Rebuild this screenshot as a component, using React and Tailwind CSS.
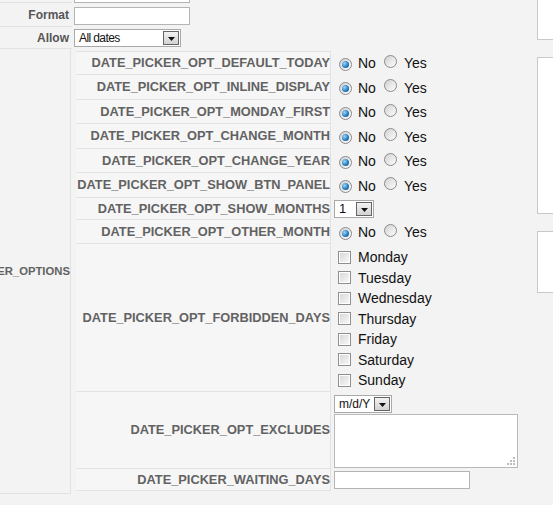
import React from 'react'

// -- small form pieces -------------------------------------------------

function Radio({ checked }) {
  return (
    <span className="inline-flex shrink-0 w-[13px] h-[13px] rounded-full border border-[#8a8a8a] bg-linear-to-br from-[#d2d2d2] to-[#fdfdfd] items-center justify-center">
      {checked && (
        <span className="w-[7px] h-[7px] rounded-full bg-[radial-gradient(circle_at_35%_35%,#9ad8fb,#2a7fc0_55%,#0c4479)]" />
      )}
    </span>
  )
}

function Check() {
  return (
    <span className="inline-flex shrink-0 w-[13px] h-[13px] border border-[#8e8e8e] bg-white p-px">
      <span className="block w-full h-full bg-linear-to-br from-[#d9d9d9] to-[#f7f7f7]" />
    </span>
  )
}

function Arrow() {
  return (
    <span className="flex shrink-0 w-[16px] h-[14px] border border-[#646464] bg-linear-to-b from-[#f2f2f2] to-[#d2d2d2] items-center justify-center">
      <svg width="7" height="4" viewBox="0 0 7 4" className="mt-[2px]">
        <path d="M0 0h7L3.5 4z" fill="#111" />
      </svg>
    </span>
  )
}

function YesNo() {
  return (
    <div className="flex items-center text-[14px] text-[#111]">
      <span className="ml-[5px]"><Radio checked /></span>
      <span className="ml-[6px] mt-px">No</span>
      <span className="ml-[8px]"><Radio /></span>
      <span className="ml-[7px] mt-px">Yes</span>
    </div>
  )
}

// -- nested option rows ------------------------------------------------

function OptRow({ label, h, first, children }) {
  return (
    <div className={`flex ${h}`}>
      <div
        className={`w-[255px] shrink-0 bg-[#f6f6f6] border-b border-r border-[#e2e2e2] flex items-center justify-end text-[12.8px] font-bold text-[#626262] whitespace-nowrap ${first ? 'border-t' : ''}`}
      >
        {label}
      </div>
      <div className="flex-1 flex items-center pl-[3px]">{children}</div>
    </div>
  )
}

const DAYS = ['Monday', 'Tuesday', 'Wednesday', 'Thursday', 'Friday', 'Saturday', 'Sunday']

export default function App() {
  return (
    <div className="w-[553px] h-[505px] overflow-hidden bg-[#f3f3f3] flex font-['Liberation_Sans',Arial,sans-serif]">
      <div className="w-[537px] shrink-0 -mt-[20px]">
        {/* cut-off first row */}
        <div className="flex h-[23px]">
          <div className="w-[72px] shrink-0 border-b border-[#e2e2e2]" />
          <div className="pl-[2px] pt-[5px]">
            <div className="w-[116px] h-[18px] bg-white border border-[#b4b4b4]" />
          </div>
        </div>

        <div className="flex h-[24px]">
          <div className="w-[72px] shrink-0 border-b border-[#e2e2e2] flex items-center justify-end pr-[3px] text-[12px] font-bold text-[#555]">
            Format
          </div>
          <div className="pl-[2px] pt-[4px]">
            <div className="w-[116px] h-[18px] bg-white border border-[#b4b4b4]" />
          </div>
        </div>

        <div className="flex h-[22px]">
          <div className="w-[72px] shrink-0 border-b border-[#e2e2e2] flex items-center justify-end pr-[3px] text-[12px] font-bold text-[#555]">
            Allow
          </div>
          <div className="pl-[2px] pt-[2px]">
            <div className="w-[107px] h-[18px] bg-white border border-[#a9a9a9] flex items-center pl-[4px] pr-px">
              <span className="flex-1 text-[12px] tracking-[-0.6px] text-[#111]">All dates</span>
              <Arrow />
            </div>
          </div>
        </div>

        {/* date picker options */}
        <div className="flex h-[445px]">
          <div className="w-[71px] shrink-0 border-r border-b border-[#e2e2e2] flex items-center justify-end overflow-hidden">
            <span className="text-[11.3px] font-bold text-[#626262] whitespace-nowrap">DATE_PICKER_OPTIONS</span>
          </div>
          <div className="flex-1 ml-[5px] mt-[2px]">
            <OptRow label="DATE_PICKER_OPT_DEFAULT_TODAY" h="h-[24px]" first><YesNo /></OptRow>
            <OptRow label="DATE_PICKER_OPT_INLINE_DISPLAY" h="h-[25px]"><YesNo /></OptRow>
            <OptRow label="DATE_PICKER_OPT_MONDAY_FIRST" h="h-[24px]"><YesNo /></OptRow>
            <OptRow label="DATE_PICKER_OPT_CHANGE_MONTH" h="h-[25px]"><YesNo /></OptRow>
            <OptRow label="DATE_PICKER_OPT_CHANGE_YEAR" h="h-[24px]"><YesNo /></OptRow>
            <OptRow label="DATE_PICKER_OPT_SHOW_BTN_PANEL" h="h-[25px]"><YesNo /></OptRow>
            <OptRow label="DATE_PICKER_OPT_SHOW_MONTHS" h="h-[22px]">
              <div className="w-[40px] h-[18px] bg-white border border-[#a9a9a9] flex items-center pl-[4px] pr-px">
                <span className="flex-1 text-[13px] text-[#111]">1</span>
                <Arrow />
              </div>
            </OptRow>
            <OptRow label="DATE_PICKER_OPT_OTHER_MONTH" h="h-[24px]"><YesNo /></OptRow>
            <OptRow label="DATE_PICKER_OPT_FORBIDDEN_DAYS" h="h-[148px]">
              <div className="self-start pt-[3px] flex flex-col">
                {DAYS.map(d => (
                  <label key={d} className="h-[20.5px] flex items-center text-[14px] text-[#111]">
                    <span className="ml-[4px]"><Check /></span>
                    <span className="ml-[7px] mt-px">{d}</span>
                  </label>
                ))}
              </div>
            </OptRow>
            <OptRow label="DATE_PICKER_OPT_EXCLUDES" h="h-[77px]">
              <div className="self-start pt-[3px] flex flex-col gap-px">
                <div className="w-[58px] h-[18px] bg-white border border-[#a9a9a9] flex items-center pl-[4px] pr-px">
                  <span className="flex-1 text-[12px] text-[#111]">m/d/Y</span>
                  <Arrow />
                </div>
                <div className="relative w-[184px] h-[54px] bg-white border border-[#b9b9b9]">
                  <svg width="9" height="9" viewBox="0 0 9 9" className="absolute right-[2px] bottom-[2px]">
                    <g fill="#bdbdbd">
                      <rect x="7" y="1" width="2" height="2" />
                      <rect x="4" y="4" width="2" height="2" />
                      <rect x="7" y="4" width="2" height="2" />
                      <rect x="1" y="7" width="2" height="2" />
                      <rect x="4" y="7" width="2" height="2" />
                      <rect x="7" y="7" width="2" height="2" />
                    </g>
                  </svg>
                </div>
              </div>
            </OptRow>
            <OptRow label="DATE_PICKER_WAITING_DAYS" h="h-[22px]">
              <div className="w-[136px] h-[18px] bg-white border border-[#b4b4b4]" />
            </OptRow>
          </div>
        </div>
      </div>

      {/* neighbouring column, mostly off screen */}
      <div className="w-[200px] shrink-0 -mt-[20px] flex flex-col">
        <div className="h-[60px] bg-white border border-[#c9c9c9]" />
        <div className="mt-[17px] h-[157px] bg-white border border-[#c9c9c9]" />
        <div className="mt-[17px] h-[62px] bg-white border border-[#c9c9c9]" />
      </div>
    </div>
  )
}
